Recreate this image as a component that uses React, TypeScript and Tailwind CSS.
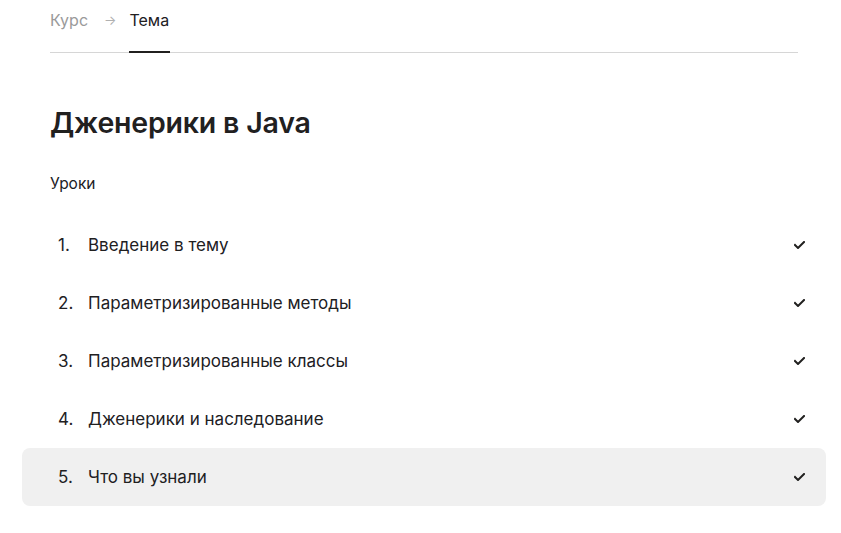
import React from 'react';

const lessons = [
  'Введение в тему',
  'Параметризированные методы',
  'Параметризированные классы',
  'Дженерики и наследование',
  'Что вы узнали',
];

const CheckIcon = () => (
  <svg className="h-[8px] w-[11px]" viewBox="0 0 11 8" fill="none">
    <path d="M1 4l3 3 6-6" stroke="#21201f" strokeWidth={2} strokeLinecap="square" />
  </svg>
);

export default function App() {
  const active = 4;
  return (
    <div className="min-h-screen bg-white text-[#21201f]" style={{ fontFamily: 'Inter, "Noto Sans", sans-serif' }}>
      <div className="ml-[50px] w-[748px]">
        {/* breadcrumbs / tabs */}
        <div className="flex items-end border-b border-[#d6d6d6] h-[53px]">
          <span className="pb-[21px] text-[16px] leading-[22px] text-[#9a9a9a]">Курс</span>
          <span className="pb-[21px] ml-[16px] mr-[13px] text-[13px] leading-[22px] text-[#b0b0b0]">→</span>
          <span className="relative pb-[21px] text-[16px] leading-[22px]">
            Тема
            <span className="absolute left-0 right-[-1px] bottom-[-1px] h-[2px] bg-[#21201f]" />
          </span>
        </div>

        <h1 className="mt-[51px] text-[28.5px] leading-[38px] font-semibold tracking-[-0.2px]">Дженерики в Java</h1>

        <div className="mt-[31px] text-[15.5px] leading-[22px]">Уроки</div>

        <ul className="mt-[21px] -mx-[28px]">
          {lessons.map((title, i) => (
            <li
              key={title}
              className={`flex items-center h-[58px] rounded-[8px] pl-[36px] pr-[21px] ${i === active ? 'bg-[#f0f0f0]' : ''}`}
            >
              <span className="w-[30px] pt-[2px] text-[17px]">{i + 1}.</span>
              <span className="flex-1 pt-[2px] text-[17px]">{title}</span>
              <CheckIcon />
            </li>
          ))}
        </ul>
      </div>
    </div>
  );
}
